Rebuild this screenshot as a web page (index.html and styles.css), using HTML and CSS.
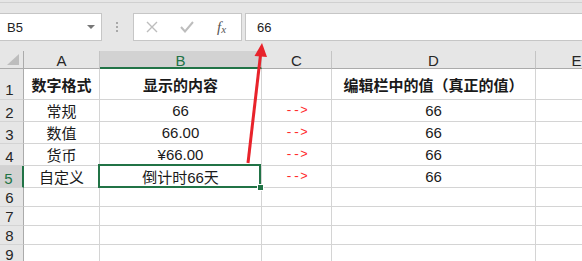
FILE: index.html
```html
<!DOCTYPE html>
<html lang="zh-CN">
<head>
    <meta charset="UTF-8">
    <meta name="viewport" content="width=device-width, initial-scale=1.0">
    <title>数字格式</title>
    <link rel="stylesheet" href="styles.css">
</head>
<body>

<div class="topline"></div>
<div class="toolbar">
    <div class="namebox"><span>B5</span><span class="caret"></span></div>
    <div class="dots"><span></span><span></span><span></span></div>
    <div class="fbtns">
        <span class="fbtn">
            <svg width="12" height="12" viewBox="0 0 12 12"><path d="M1 1 L11 11 M11 1 L1 11" stroke="#bdbdbd" stroke-width="1.4" fill="none"/></svg>
        </span>
        <span class="fbtn">
            <svg width="14" height="12" viewBox="0 0 14 12"><path d="M1 6 L5 10.5 L13 1" stroke="#bdbdbd" stroke-width="2" fill="none"/></svg>
        </span>
        <span class="fbtn fx"><i>f</i><i class="x">x</i></span>
    </div>
    <div class="fbar">66</div>
</div>

<div class="sheet">
    <div class="ch corner"><span class="tri"></span></div>
    <div class="ch">A</div>
    <div class="ch sel">B</div>
    <div class="ch">C</div>
    <div class="ch">D</div>
    <div class="ch">E</div>

    <div class="rh tall">1</div>
    <div class="c b">数字格式</div>
    <div class="c b">显示的内容</div>
    <div class="c"></div>
    <div class="c b">编辑栏中的值（真正的值）</div>
    <div class="c"></div>

    <div class="rh">2</div>
    <div class="c">常规</div>
    <div class="c">66</div>
    <div class="c arrow">--&gt;</div>
    <div class="c">66</div>
    <div class="c"></div>

    <div class="rh">3</div>
    <div class="c">数值</div>
    <div class="c">66.00</div>
    <div class="c arrow">--&gt;</div>
    <div class="c">66</div>
    <div class="c"></div>

    <div class="rh">4</div>
    <div class="c">货币</div>
    <div class="c">¥66.00</div>
    <div class="c arrow">--&gt;</div>
    <div class="c">66</div>
    <div class="c"></div>

    <div class="rh sel">5</div>
    <div class="c">自定义</div>
    <div class="c active">倒计时66天<span class="handle"></span></div>
    <div class="c arrow">--&gt;</div>
    <div class="c">66</div>
    <div class="c"></div>

    <div class="rh">6</div>
    <div class="c"></div><div class="c"></div><div class="c"></div><div class="c"></div><div class="c"></div>
    <div class="rh">7</div>
    <div class="c"></div><div class="c"></div><div class="c"></div><div class="c"></div><div class="c"></div>
    <div class="rh">8</div>
    <div class="c"></div><div class="c"></div><div class="c"></div><div class="c"></div><div class="c"></div>
    <div class="rh">9</div>
    <div class="c"></div><div class="c"></div><div class="c"></div><div class="c"></div><div class="c"></div>
</div>

<!-- 指向编辑栏的红色箭头 -->
<svg class="pointer" width="582" height="261" viewBox="0 0 582 261">
    <line x1="248" y1="163" x2="260.6" y2="54" stroke="#e8232b" stroke-width="3"/>
    <polygon points="262,43 254.5,56 267,57" fill="#e8232b"/>
</svg>

</body>
</html>
```

FILE: styles.css
```css
body {
    margin: 0;
    width: 582px;
    height: 261px;
    overflow: hidden;
    position: relative;
    background-color: #fff;
    font-family: "Liberation Sans", "Noto Sans CJK SC", sans-serif;
    color: #1a1a1a;
}
.topline {
    height: 2px;
    background-color: #e6e6e6;
    border-bottom: 1px solid #d0d0d0;
}
.toolbar {
    box-sizing: border-box;
    height: 48px;
    padding-top: 10px;
    background-color: #e6e6e6;
    display: flex;
    align-items: flex-start;
}
.namebox {
    box-sizing: border-box;
    width: 102px;
    height: 28px;
    background-color: #fff;
    border: 1px solid #c6c6c6;
    border-left: none;
    display: flex;
    align-items: center;
    padding-left: 7px;
    font-size: 13px;
    color: #222;
}
.caret {
    margin-left: auto;
    margin-right: 6px;
    border-left: 4px solid transparent;
    border-right: 4px solid transparent;
    border-top: 4px solid #777;
}
.dots {
    margin-left: 14px;
    margin-top: 9px;
    display: flex;
    flex-direction: column;
    gap: 2px;
}
.dots span {
    width: 2px;
    height: 2px;
    background-color: #a8a8a8;
}
.fbtns {
    box-sizing: border-box;
    width: 109px;
    height: 28px;
    margin-left: 15px;
    background-color: #fff;
    border: 1px solid #c6c6c6;
    display: flex;
    align-items: center;
}
.fbtn {
    width: 35px;
    display: flex;
    justify-content: center;
    align-items: center;
}
.fx {
    font-family: "Liberation Serif", serif;
    font-size: 15px;
    color: #555;
}
.fx .x {
    font-size: 11px;
    margin-top: 4px;
}
.fbar {
    box-sizing: border-box;
    flex: 1;
    height: 28px;
    margin-left: 3px;
    background-color: #fff;
    border: 1px solid #c6c6c6;
    border-right: none;
    padding-left: 11px;
    display: flex;
    align-items: center;
    font-size: 13px;
    color: #222;
}

.sheet {
    display: grid;
    width: 618px;
    grid-template-columns: 24px 76px 162px 70px 204px 82px;
    grid-template-rows: 18px 31px 22px 22px 22px 22px 19px 19px 19px 19px;
    font-size: 15px;
}
.ch, .rh, .c {
    box-sizing: border-box;
    display: flex;
    align-items: center;
    justify-content: center;
}
.ch {
    background-color: #e6e6e6;
    border-right: 1px solid #c4c4c4;
    border-bottom: 1px solid #ababab;
    color: #262626;
    padding-top: 1px;
}
.ch.sel {
    background-color: #d2d2d2;
    color: #217346;
    border-bottom: 2px solid #217346;
    padding-top: 2px;
}
.corner {
    justify-content: flex-end;
    align-items: flex-end;
    padding: 0 4px 3px 0;
    border-right-color: #ababab;
}
.tri {
    border-left: 12px solid transparent;
    border-bottom: 11px solid #bdbdbd;
}
.rh {
    background-color: #e6e6e6;
    border-right: 1px solid #ababab;
    border-bottom: 1px solid #d4d4d4;
    padding-right: 4px;
    align-items: flex-end;
    color: #262626;
}
.rh.tall {
    padding-bottom: 1px;
}
.rh.sel {
    background-color: #d2d2d2;
    color: #217346;
    border-right: 2px solid #217346;
    padding-right: 5px;
}
.c {
    border-right: 1px solid #d4d4d4;
    border-bottom: 1px solid #d4d4d4;
    white-space: nowrap;
}
.b {
    font-weight: bold;
}
.arrow {
    font-family: "Liberation Mono", monospace;
    font-size: 12.5px;
    color: #ff2a2a;
}
.active {
    position: relative;
}
.active::before {
    content: "";
    position: absolute;
    left: -2px;
    top: -2px;
    right: 0;
    bottom: -1px;
    border: 2px solid #217346;
}
.handle {
    position: absolute;
    right: -3px;
    bottom: -4px;
    width: 5px;
    height: 5px;
    background-color: #217346;
    border: 1px solid #fff;
}
.pointer {
    position: absolute;
    left: 0;
    top: 0;
    pointer-events: none;
}
```
